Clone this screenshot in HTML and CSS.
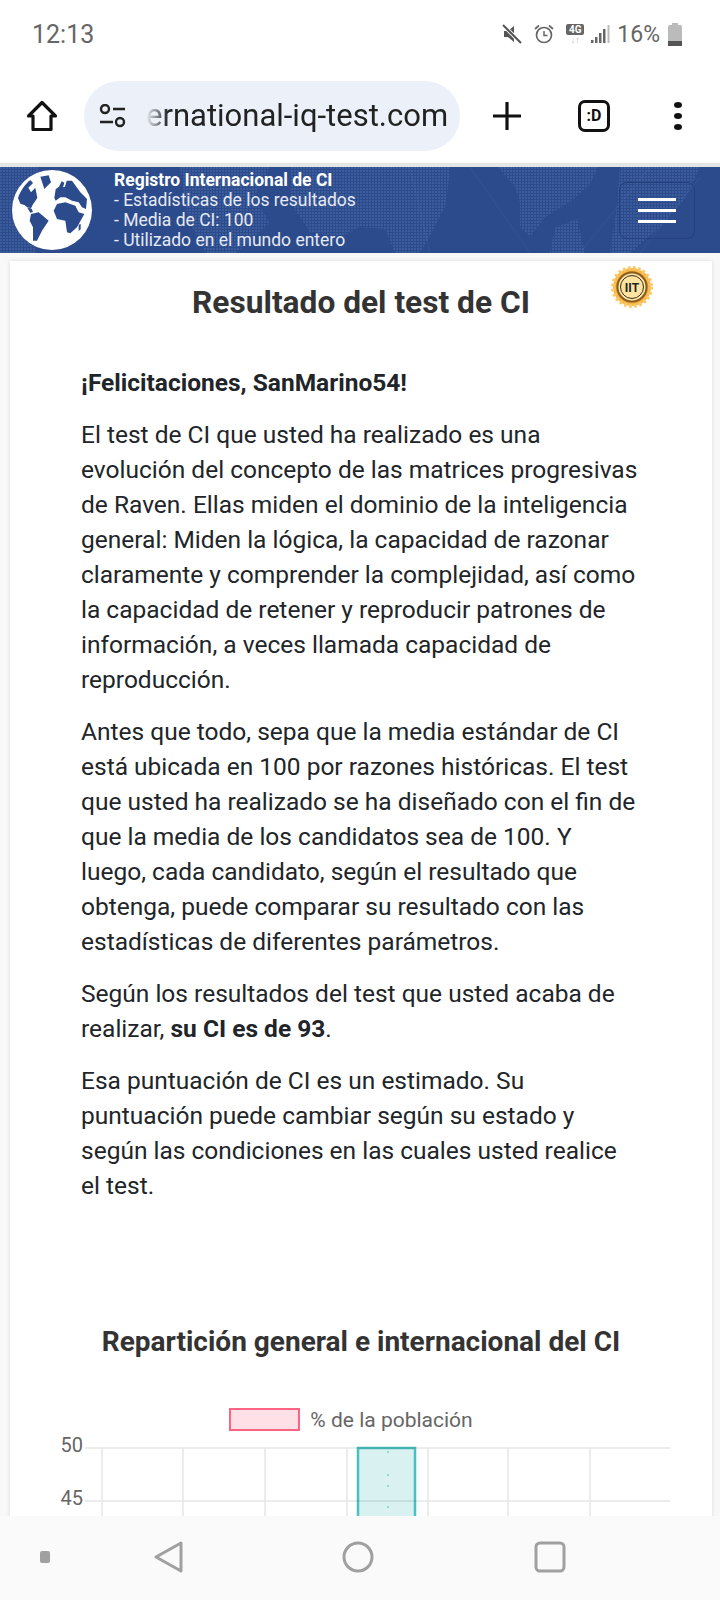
FILE: index.html
```html
<!DOCTYPE html>
<html lang="es">
  <head>
    <meta charset="utf-8">
    <title>Resultado del test de CI</title>
    <link rel="stylesheet" href="styles.css">
  </head>
  <body>
    <div class="status-bar">
      <span class="clock">12:13</span>
      <div class="status-icons">
        <svg class="icon-mute" viewBox="0 0 20 20" width="20" height="20">
          <path d="M2 7h4l6-5v16l-6-5H2z" fill="#555"/>
          <path d="M1 1l18 18" stroke="#fff" stroke-width="4"/>
          <path d="M1 1l18 18" stroke="#555" stroke-width="2"/>
        </svg>
        <svg class="icon-alarm" viewBox="0 0 22 22" width="22" height="22">
          <circle cx="11" cy="12" r="7.500" fill="none" stroke="#666" stroke-width="1.700"/>
          <path d="M11 8v4.500h3.500" fill="none" stroke="#666" stroke-width="1.500"/>
          <path d="M2 6l4-3.500M20 6l-4-3.500" stroke="#666" stroke-width="1.700"/>
        </svg>
        <div class="net-type">
          <span class="net-badge">4G</span>
          <span class="net-arrows">↓↑</span>
        </div>
        <svg class="icon-signal" viewBox="0 0 20 20" width="20" height="20">
          <path d="M1 19h2.500v-3H1zM5 19h2.500v-6H5zM9 19h2.500V9H9zM13 19h2.500V5H13z" fill="#666"/>
          <path d="M17.500 19h2V1h-2z" fill="#bbb"/>
        </svg>
        <span class="battery-text">16%</span>
        <div class="battery"><div class="battery-level"></div></div>
      </div>
    </div>

    <div class="toolbar">
      <svg class="icon-home" viewBox="0 0 32 32" width="32" height="32">
        <path d="M16 2.500L2.500 16H7v13.500h18V16h4.500z" fill="none" stroke="#111" stroke-width="3.200" stroke-linejoin="round"/>
      </svg>
      <div class="url-bar">
        <svg class="icon-tune" viewBox="0 0 28 24" width="28" height="24">
          <circle cx="6" cy="5" r="4" fill="none" stroke="#222" stroke-width="2.400"/>
          <path d="M14 5h12M1 18h13" stroke="#222" stroke-width="2.600"/>
          <circle cx="21" cy="18" r="4" fill="none" stroke="#222" stroke-width="2.400"/>
        </svg>
        <div class="url-text">ernational-iq-test.com</div>
      </div>
      <svg class="icon-plus" viewBox="0 0 30 30" width="30" height="30">
        <path d="M15 1v28M1 15h28" stroke="#111" stroke-width="3.200"/>
      </svg>
      <div class="tab-count">:D</div>
      <div class="menu-dots"><span></span><span></span><span></span></div>
    </div>

    <div class="page">
      <header class="site-header">
        <svg class="header-map" viewBox="0 0 720 86" width="720" height="86">
          <defs>
            <pattern id="dots" width="3" height="3" patternUnits="userSpaceOnUse">
              <rect width="2" height="2" fill="#5b7ab5" opacity="0.35"/>
            </pattern>
          </defs>
          <path d="M0 0h38l14 30-22 24 6 32H0z" fill="url(#dots)"/>
          <path d="M180 0h90l-16 30 16 26-34 30h-30l-18-34z" fill="url(#dots)"/>
          <path d="M290 0h160l-2 20-3 20-13 25-12 21h-25l-10-24-25-2-20 10-30-5-20-30z" fill="url(#dots)"/>
          <path d="M498 0h100l-8 18-20 17-25 15-15 20-10-10v-25l-5-15z" fill="url(#dots)"/>
          <path d="M555 60l22-8 8 34h-35z" fill="url(#dots)"/>
          <path d="M620 0h80l-14 30-26 30-30 26h-20l6-40z" fill="url(#dots)"/>
          <path d="M470 0l60 86M650 0l-70 86M410 0l20 86M700 10l-60 76" stroke="#fff" stroke-width="1" opacity="0.04"/>
        </svg>
        <svg class="globe" viewBox="15 8 240 240" width="80" height="80">
          <circle cx="135" cy="128" r="120" fill="#fff"/>
          <path d="M33 92C40 70 55 50 70 38l8 9-14 14 8 14 13-14 6 30-6 10-7 10-6 12-12-4-8-6-12-4z" fill="#2c4b8d"/>
          <path d="M100 28l25-4 7 21-20 20z" fill="#2c4b8d"/>
          <path d="M60 120l14 4 4 10-8 2z" fill="#2c4b8d"/>
          <path d="M72 140l23-5 30 25-20 30-15 30H78v-40l-10-20z" fill="#2c4b8d"/>
          <path d="M146 66l10-8 8-16 8 4-4 14 6-2 5-18 16 0 25 35 20 20-3 30-12-5-10-15-20-5-20-10-15 0-14 10-4-8z" fill="#2c4b8d"/>
          <path d="M140 130l10-20 25-5 30 10 10 20 17 5-22 40-20 18-10-3-5-35-25-5z" fill="#2c4b8d"/>
          <path d="M215 172l6-2 0 16-6 5z" fill="#2c4b8d"/>
        </svg>
        <div class="header-text">
          <strong>Registro Internacional de CI</strong>
          <span>- Estadísticas de los resultados</span>
          <span>- Media de CI: 100</span>
          <span>- Utilizado en el mundo entero</span>
        </div>
        <button class="nav-toggle"><span></span><span></span><span></span></button>
      </header>

      <main class="card">
        <h1 class="result-title">Resultado del test de CI</h1>
        <svg class="medal" viewBox="0 0 44 44" width="44" height="44">
          <circle cx="22" cy="22" r="19" fill="#f9b84a" stroke="#fbc868" stroke-width="4" stroke-dasharray="2.500 2.500"/>
          <circle cx="22" cy="22" r="16" fill="#d99a32"/>
          <circle cx="22" cy="22" r="14.500" fill="#fde9b4" stroke="#8a5e1c" stroke-width="2"/>
          <circle cx="22" cy="22" r="11.500" fill="#fde3a0" stroke="#3b2a10" stroke-width="1"/>
          <text x="22" y="26.500" text-anchor="middle" class="medal-text">IIT</text>
        </svg>

        <div class="result-text">
          <p><strong>¡Felicitaciones, SanMarino54!</strong></p>
          <p>El test de CI que usted ha realizado es una evolución del concepto de las matrices progresivas de Raven. Ellas miden el dominio de la inteligencia general: Miden la lógica, la capacidad de razonar claramente y comprender la complejidad, así como la capacidad de retener y reproducir patrones de información, a veces llamada capacidad de reproducción.</p>
          <p>Antes que todo, sepa que la media estándar de CI está ubicada en 100 por razones históricas. El test que usted ha realizado se ha diseñado con el fin de que la media de los candidatos sea de 100. Y luego, cada candidato, según el resultado que obtenga, puede comparar su resultado con las estadísticas de diferentes parámetros.</p>
          <p>Según los resultados del test que usted acaba de realizar, <strong>su CI es de 93</strong>.</p>
          <p>Esa puntuación de CI es un estimado. Su puntuación puede cambiar según su estado y según las condiciones en las cuales usted realice el test.</p>
        </div>

        <h2 class="chart-title">Repartición general e internacional del CI</h2>

        <div class="chart">
          <div class="legend">
            <span class="legend-box"></span>
            <span>% de la población</span>
          </div>
          <svg class="plot" viewBox="0 0 702 100" width="702" height="100">
            <text class="tick" x="73" y="18" text-anchor="end">50</text>
            <text class="tick" x="73" y="71" text-anchor="end">45</text>
            <rect class="bar" x="348" y="14" width="57" height="100"/>
            <path class="bar-dots" d="M378 17v2M378 40v2M378 51v2M378 72v2"/>
            <path class="grid" d="M75 14h585M75 67h585M92 14v86M173 14v86M255 14v86M337 14v86M418 14v86M498 14v86M580 14v86"/>
          </svg>
        </div>
      </main>
    </div>

    <nav class="nav-bar">
      <span class="nav-dot"></span>
      <svg viewBox="0 0 30 32" width="30" height="32">
        <path d="M27 2L2 16l25 14z" fill="none" stroke="#a0a0a0" stroke-width="3" stroke-linejoin="round"/>
      </svg>
      <svg viewBox="0 0 32 32" width="32" height="32">
        <circle cx="16" cy="16" r="14" fill="none" stroke="#a0a0a0" stroke-width="3"/>
      </svg>
      <svg viewBox="0 0 32 32" width="32" height="32">
        <rect x="2" y="2" width="28" height="28" rx="4" fill="none" stroke="#a0a0a0" stroke-width="3"/>
      </svg>
    </nav>
  </body>
</html>
```

FILE: styles.css
```css
* {
  box-sizing: border-box;
}
body {
  margin: 0;
  width: 720px;
  height: 1600px;
  overflow: hidden;
  display: flex;
  flex-direction: column;
  font-family: Roboto, "Liberation Sans", sans-serif;
  background-color: #fff;
  color: #212529;
}

/* status bar */
.status-bar {
  height: 68px;
  flex-shrink: 0;
  display: flex;
  justify-content: space-between;
  align-items: center;
  padding: 0 38px 0 32px;
  color: #666;
}
.clock {
  font-size: 25px;
}
.status-icons {
  display: flex;
  align-items: center;
}
.icon-mute {
  margin-right: 11px;
}
.icon-alarm {
  margin-right: 11px;
}
.net-type {
  width: 18px;
  margin-right: 6px;
  display: flex;
  flex-direction: column;
  align-items: center;
}
.net-badge {
  width: 18px;
  height: 11px;
  border-radius: 2px;
  background-color: #666;
  color: #fff;
  font-size: 10px;
  line-height: 11px;
  font-weight: 700;
  text-align: center;
}
.net-arrows {
  font-size: 9px;
  line-height: 10px;
  color: #bbb;
  font-weight: 700;
}
.battery-text {
  font-size: 23px;
  margin-left: 7px;
  margin-right: 8px;
}
.battery {
  position: relative;
  width: 14px;
  height: 21px;
  margin-top: 2px;
  border-radius: 2px;
  background-color: #bbb;
  display: flex;
  align-items: flex-end;
}
.battery::before {
  content: "";
  position: absolute;
  top: -2px;
  left: 4px;
  width: 6px;
  height: 2px;
  background-color: #bbb;
}
.battery-level {
  width: 14px;
  height: 5px;
  background-color: #555;
}

/* browser toolbar */
.toolbar {
  height: 99px;
  flex-shrink: 0;
  display: flex;
  align-items: center;
  padding: 0 0 0 26px;
  border-bottom: 4px solid #e4e6e6;
}
.url-bar {
  width: 376px;
  height: 70px;
  margin-left: 26px;
  border-radius: 35px;
  background-color: #ebf0f9;
  display: flex;
  align-items: center;
  padding-left: 15px;
}
.url-text {
  width: 304px;
  margin-left: 19px;
  font-size: 31px;
  color: #222;
  white-space: nowrap;
  overflow: hidden;
  -webkit-mask-image: linear-gradient(to right, transparent, #000 22px);
  mask-image: linear-gradient(to right, transparent, #000 22px);
}
.icon-plus {
  margin-left: 32px;
}
.tab-count {
  width: 32px;
  height: 32px;
  margin-left: 56px;
  border: 3px solid #111;
  border-radius: 7px;
  font-size: 16px;
  line-height: 26px;
  font-weight: 700;
  text-align: center;
  color: #111;
}
.menu-dots {
  margin-left: 64px;
  display: flex;
  flex-direction: column;
  gap: 5px;
}
.menu-dots span {
  width: 8px;
  height: 6px;
  border-radius: 50%;
  background-color: #111;
}

/* page */
.page {
  flex: 1;
  min-height: 0;
  overflow: hidden;
  background-color: #f8f8f8;
}
.site-header {
  position: relative;
  height: 86px;
  display: flex;
  align-items: center;
  padding-left: 12px;
  background-color: #2c4b8d;
  color: #fff;
}
.header-map {
  position: absolute;
  top: 0;
  left: 0;
}
.globe {
  position: relative;
  flex-shrink: 0;
}
.header-text {
  position: relative;
  margin-left: 22px;
  display: flex;
  flex-direction: column;
  font-size: 17.500px;
  line-height: 20px;
  color: #e6eaf3;
}
.header-text strong {
  color: #fff;
  font-weight: 700;
  font-size: 17.500px;
}
.nav-toggle {
  position: relative;
  width: 76px;
  height: 57px;
  margin-left: auto;
  margin-right: 25px;
  padding: 0;
  background: none;
  border: 1px solid #243f7b;
  border-radius: 8px;
  display: flex;
  flex-direction: column;
  align-items: center;
  justify-content: center;
  gap: 8px;
}
.nav-toggle span {
  width: 38px;
  height: 3px;
  background-color: #fff;
}

.card {
  position: relative;
  margin: 8px 8px 0 10px;
  padding: 19px 0 0 71px;
  background-color: #fff;
  box-shadow: 0 0 4px rgba(0, 0, 0, 0.12);
}
.result-title {
  margin: 0 0 0 -71px;
  font-size: 31.700px;
  line-height: 46px;
  font-weight: 700;
  text-align: center;
  color: #333;
}
.medal {
  position: absolute;
  top: 4px;
  left: 600px;
}
.medal-text {
  font-size: 12px;
  font-weight: 700;
  fill: #222;
}
.result-text {
  width: 560px;
  margin-top: 39px;
  font-size: 24.500px;
  line-height: 35px;
}
.result-text p {
  margin: 0 0 17px;
}
.chart-title {
  margin: 119px 0 0 -71px;
  font-size: 28px;
  line-height: 40px;
  font-weight: 700;
  text-align: center;
  color: #333;
}
.chart {
  margin: 46px 0 0 -71px;
}
.legend {
  display: flex;
  justify-content: center;
  align-items: center;
  gap: 10px;
  padding-right: 20px;
  font-size: 21px;
  line-height: 22px;
  color: #666;
}
.legend-box {
  width: 71px;
  height: 23px;
  background-color: #ffe0e6;
  border: 2px solid #ff6384;
}
.plot {
  display: block;
  margin-top: 3px;
}
.tick {
  font-size: 20px;
  fill: #666;
}
.grid {
  fill: none;
  stroke: rgba(0, 0, 0, 0.1);
  stroke-width: 1.500;
}
.bar {
  fill: #d9f1f1;
  stroke: #4bc0c0;
  stroke-width: 2.500;
}
.bar-dots {
  stroke: #4bc0c0;
  stroke-width: 1;
}

/* bottom navigation */
.nav-bar {
  height: 84px;
  flex-shrink: 0;
  position: relative;
  background-color: #fafafa;
  display: flex;
  align-items: center;
  padding: 0 0 2px 40px;
}
.nav-dot {
  width: 10px;
  height: 12px;
  border-radius: 2px;
  background-color: #a0a0a0;
}
.nav-bar svg:nth-child(2) {
  margin-left: 104px;
}
.nav-bar svg:nth-child(3) {
  margin-left: 158px;
}
.nav-bar svg:nth-child(4) {
  margin-left: 160px;
}
```
